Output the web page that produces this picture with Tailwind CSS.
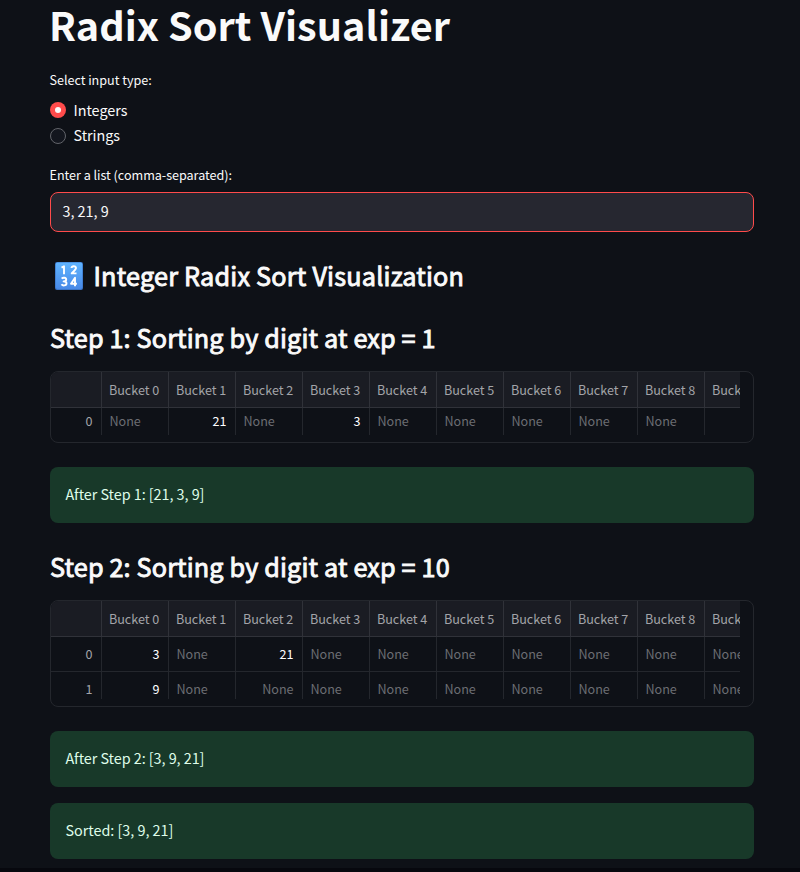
<!DOCTYPE html>
<html lang="en">
<head>
<meta charset="utf-8">
<title>Radix Sort Visualizer</title>
<script src="https://cdn.jsdelivr.net/npm/@tailwindcss/browser@4"></script>
</head>
<body class="bg-[#0e1117]">
<main class="h-[872px] overflow-hidden border-b-4 border-[#07080e] bg-[#0e1117] pl-[50px] pr-[46px] font-['Noto_Sans_CJK_SC','Noto_Sans',sans-serif] text-[14.4px] tracking-[-0.03px] text-[#fafafa] whitespace-nowrap">
  <h1 class="-ml-px h-[53px] text-[39.6px] leading-[47px] font-bold tracking-[0.03px]">Radix Sort Visualizer</h1>
  <div class="mt-[17px] -ml-[0.5px] h-5 text-[12.6px] leading-5">Select input type:</div>
  <div class="mt-2 flex h-6 items-center gap-[7.5px] leading-[22px]">
    <span class="flex size-4 items-center justify-center rounded-full bg-[#ff4b4b]"><span class="size-1.5 rounded-full bg-[#fafafa]"></span></span>
    <span>Integers</span>
  </div>
  <div class="mt-0.5 flex h-6 items-center gap-[7.5px] leading-[22px]">
    <span class="size-4 rounded-full border border-[#62646a] bg-[#13161e]"></span>
    <span class="pb-0.5">Strings</span>
  </div>
  <div class="mt-[17px] -ml-[0.5px] h-5 text-[12.6px] leading-5">Enter a list (comma-separated):</div>
  <div class="mt-[7px] flex h-10 items-center rounded-lg border border-[#ff4b4b] bg-[#262730] pb-0.5 pl-[11.5px]">3, 21, 9</div>
  <h3 class="mt-[27px] flex h-[34px] items-center text-[25.2px] leading-[32px] font-normal tracking-[0.22px]">
    <svg class="mr-[10.5px] ml-[5px] h-7 w-7" viewBox="0 0 28 28">
      <defs><linearGradient id="keycap" x1="0" y1="0" x2="0" y2="1"><stop offset="0" stop-color="#60b5ff"/><stop offset="1" stop-color="#4889e7"/></linearGradient></defs>
      <rect width="28" height="28" rx="2" fill="#3974c7"/>
      <rect x=".7" y=".5" width="26.6" height="26.5" rx="2" fill="url(#keycap)"/>
      <g fill="none" stroke="#fff" stroke-width="1.9" stroke-linejoin="round">
        <path d="M6.500 5.700 9 4.300v8"/>
        <path d="M16.500 6c.2-2.400 4.700-2.300 4.500.2-.1 1.600-3 3.600-4.300 5.200h4.800"/>
        <path d="M6.700 16.700c1.200-1.500 4.600-1.300 4.500.9-.1 1.300-1.200 1.800-2.600 1.800 1.700 0 3 .6 2.900 2-.1 2.400-3.800 2.600-5 .9"/>
        <path d="M20 24.200v-8.400l-4 5.900h5.900"/>
      </g>
    </svg>
    <span class="pb-0.5 [-webkit-text-stroke:0.9px_#fafafa]">Integer Radix Sort Visualization</span>
  </h3>
  <h3 class="mt-[29px] h-[34px] text-[25.2px] leading-[30px] font-normal tracking-[0.16px] [-webkit-text-stroke:0.9px_#fafafa]">Step 1: Sorting by digit at exp = 1</h3>

  <div class="mt-[15px] h-[72px] overflow-hidden rounded-lg border border-[#24272d] text-[12.6px]">
    <div class="h-[63px] w-[689px] overflow-hidden">
      <div class="grid h-9 w-[721px] grid-cols-[51px_repeat(10,67px)] border-b border-[#303239] bg-[#1a1c23] leading-[35px] text-[#a3a4a9] *:border-r *:border-[#303239] *:pl-[7px]">
        <span></span><span>Bucket 0</span><span>Bucket 1</span><span>Bucket 2</span><span>Bucket 3</span><span>Bucket 4</span><span>Bucket 5</span><span>Bucket 6</span><span>Bucket 7</span><span>Bucket 8</span><span>Bucket 9</span>
      </div>
      <div class="grid h-[35px] w-[721px] grid-cols-[51px_repeat(10,67px)] leading-[26px] text-[#6c6e73] *:border-r *:border-[#24272d] *:pr-[8.5px] *:pl-[7.5px]">
        <span class="text-right text-[#a3a4a9]">0</span><span>None</span><span class="text-right text-white">21</span><span>None</span><span class="text-right text-white">3</span><span>None</span><span>None</span><span>None</span><span>None</span><span>None</span><span class="text-right text-white">9</span>
      </div>
    </div>
  </div>
  <div class="mt-6 flex h-14 items-center rounded-lg bg-[#183929] pb-0.5 pl-[15.5px] tracking-[-0.05px] text-[#dffde9]">After Step 1: [21, 3, 9]</div>

  <h3 class="mt-[28px] h-[34px] text-[25.2px] leading-[30px] font-normal tracking-[0.16px] [-webkit-text-stroke:0.9px_#fafafa]">Step 2: Sorting by digit at exp = 10</h3>
  <div class="mt-[15px] h-[107px] overflow-hidden rounded-lg border border-[#24272d] text-[12.6px]">
    <div class="h-[98px] w-[689px] overflow-hidden">
      <div class="grid h-9 w-[721px] grid-cols-[51px_repeat(10,67px)] border-b border-[#303239] bg-[#1a1c23] leading-[35px] text-[#a3a4a9] *:border-r *:border-[#303239] *:pl-[7px]">
        <span></span><span>Bucket 0</span><span>Bucket 1</span><span>Bucket 2</span><span>Bucket 3</span><span>Bucket 4</span><span>Bucket 5</span><span>Bucket 6</span><span>Bucket 7</span><span>Bucket 8</span><span>Bucket 9</span>
      </div>
      <div class="grid h-[35px] w-[721px] grid-cols-[51px_repeat(10,67px)] border-b border-[#24272d] leading-[33px] text-[#6c6e73] *:border-r *:border-[#24272d] *:pr-[8.5px] *:pl-[7.5px]">
        <span class="text-right text-[#a3a4a9]">0</span><span class="text-right text-white">3</span><span>None</span><span class="text-right text-white">21</span><span>None</span><span>None</span><span>None</span><span>None</span><span>None</span><span>None</span><span>None</span>
      </div>
      <div class="grid h-[35px] w-[721px] grid-cols-[51px_repeat(10,67px)] leading-[33px] text-[#6c6e73] *:border-r *:border-[#24272d] *:pr-[8.5px] *:pl-[7.5px]">
        <span class="text-right text-[#a3a4a9]">1</span><span class="text-right text-white">9</span><span>None</span><span class="text-right">None</span><span>None</span><span>None</span><span>None</span><span>None</span><span>None</span><span>None</span><span>None</span>
      </div>
    </div>
  </div>
  <div class="mt-6 flex h-14 items-center rounded-lg bg-[#183929] pb-0.5 pl-[15.5px] tracking-[-0.05px] text-[#dffde9]">After Step 2: [3, 9, 21]</div>
  <div class="mt-4 flex h-14 items-center rounded-lg bg-[#183929] pb-0.5 pl-[15.5px] tracking-[-0.03px] text-[#dffde9]">Sorted: [3, 9, 21]</div>
</main>
</body>
</html>
